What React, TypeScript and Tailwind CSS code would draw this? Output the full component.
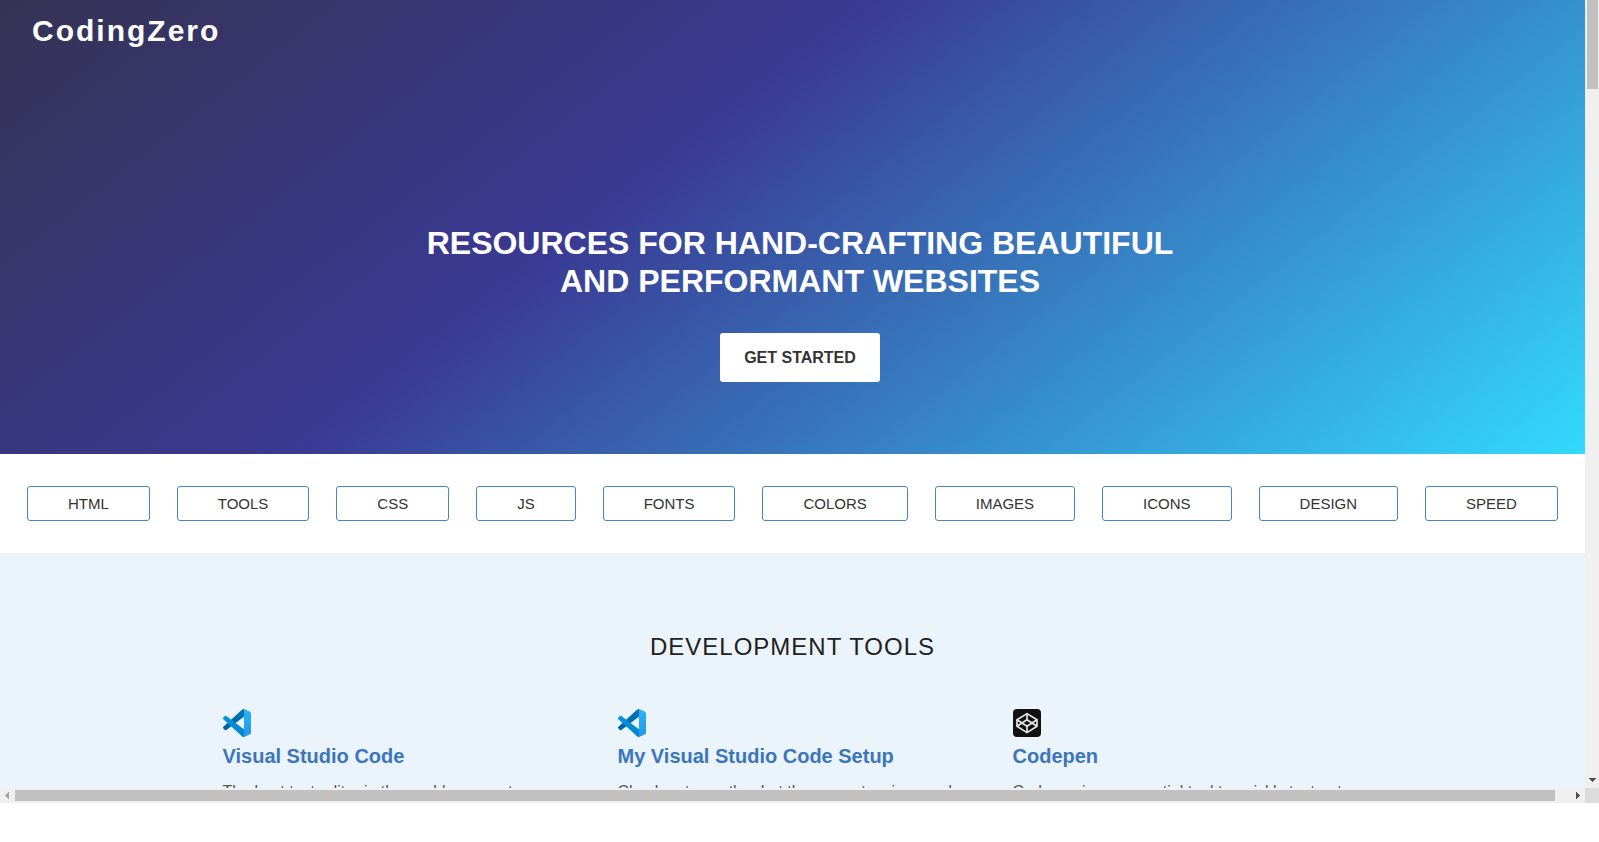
import React from "react";

const topics = ["HTML", "TOOLS", "CSS", "JS", "FONTS", "COLORS", "IMAGES", "ICONS", "DESIGN", "SPEED"];

function VsCodeIcon({ id }: { id: string }) {
  return (
    <svg viewBox="0 0 100 100" className="block size-7" aria-hidden="true">
      <defs>
        <linearGradient id={`${id}-edge`} x1="0" y1="0" x2="0" y2="1">
          <stop offset="0" stopColor="#2cb5f6" />
          <stop offset="1" stopColor="#1f96ee" />
        </linearGradient>
        <linearGradient id={`${id}-rise`} x1="1" y1="0" x2="0" y2="1">
          <stop offset="0" stopColor="#0079bf" />
          <stop offset="1" stopColor="#0062a3" />
        </linearGradient>
        <linearGradient id={`${id}-fall`} x1="0" y1="0" x2="1" y2="1">
          <stop offset="0" stopColor="#0a96de" />
          <stop offset="1" stopColor="#007fcb" />
        </linearGradient>
      </defs>
      <path
        fill={`url(#${id}-rise)`}
        d="M96.5 10.8 75.9.9a6.2 6.2 0 0 0-7.1 1.2L1.3 63.7a4.2 4.2 0 0 0 0 6.1l5.5 5a4.2 4.2 0 0 0 5.4.3L93.4 13.4c2.7-2.1 6.6-.1 6.6 3.3v-.3a6.3 6.3 0 0 0-3.5-5.6Z"
      />
      <path
        fill={`url(#${id}-fall)`}
        d="M96.5 89.2 75.9 99.1a6.2 6.2 0 0 1-7.1-1.2L1.3 36.3a4.2 4.2 0 0 1 0-6.1l5.5-5a4.2 4.2 0 0 1 5.4-.3l81.2 61.7c2.7 2.1 6.6.1 6.6-3.3v.3a6.3 6.3 0 0 1-3.5 5.6Z"
      />
      <path
        fill={`url(#${id}-edge)`}
        d="M75.9 99.1a6.2 6.2 0 0 1-7.1-1.2c2.3 2.3 6.2.7 6.2-2.6V4.7c0-3.3-3.9-4.9-6.2-2.6a6.2 6.2 0 0 1 7.1-1.2l20.6 9.9A6.3 6.3 0 0 1 100 16.4v67.2a6.3 6.3 0 0 1-3.5 5.7L75.9 99.1Z"
      />
    </svg>
  );
}

function CodepenIcon() {
  return (
    <svg viewBox="0 0 28 28" className="block size-7" aria-hidden="true">
      <rect width="28" height="28" rx="4" fill="#111" />
      <g fill="none" stroke="#e6e6e6" strokeWidth="1.7" strokeLinejoin="round">
        <path d="M14 4.6 24 10.8v6.4l-10 6.4-10-6.4v-6.4Z" />
        <path d="M14 4.6v6.2M14 17.2v6.4M4 10.8l10 6.4 10-6.4M4 17.2l10-6.4 10 6.4" />
      </g>
    </svg>
  );
}

const tools = [
  {
    title: "Visual Studio Code",
    icon: <VsCodeIcon id="vscode-a" />,
    text: "The best text editor in the world, so great",
  },
  {
    title: "My Visual Studio Code Setup",
    icon: <VsCodeIcon id="vscode-b" />,
    text: "Check out my other hot themes extensions and",
  },
  {
    title: "Codepen",
    icon: <CodepenIcon />,
    text: "Codepen is an essential tool to quickly test out",
  },
];

function Hero() {
  return (
    <header className="bg-[linear-gradient(142deg,#353353_0%,#3a3993_40%,#33d9ff_100%)] pb-18 text-white">
      <a href="#top" className="block px-8 pt-3 text-[30px] leading-[38px] font-bold tracking-[2px]">
        CodingZero
      </a>
      <div className="-mr-[15px] flex flex-col items-center pt-[174px]">
        <h1 className="max-w-200 text-center text-[32px] leading-[38px] font-bold">
          RESOURCES FOR HAND-CRAFTING BEAUTIFUL AND PERFORMANT WEBSITES
        </h1>
        <a
          href="#tools"
          className="mt-[33px] flex h-[49px] w-40 items-center justify-center rounded-[3px] bg-white text-base font-bold text-[#333]"
        >
          GET STARTED
        </a>
      </div>
    </header>
  );
}

function TopicNav() {
  return (
    <nav className="flex justify-evenly bg-white py-8">
      {topics.map((topic) => (
        <a
          key={topic}
          href={`#${topic.toLowerCase()}`}
          className="rounded-[3px] border border-[#4584cb] px-10 py-2 text-[15px] leading-[17px] text-[#333]"
        >
          {topic}
        </a>
      ))}
    </nav>
  );
}

function Tools() {
  return (
    <section id="tools" className="bg-[#ebf3fb] pt-20">
      <h2 className="text-center text-2xl leading-7 tracking-[1px] text-[#222]">DEVELOPMENT TOOLS</h2>
      <div className="mx-auto mt-12 grid max-w-[1140px] grid-cols-3 gap-x-[45px]">
        {tools.map((tool) => (
          <article key={tool.title}>
            {tool.icon}
            <h3 className="mt-[7px] text-xl leading-6 font-bold">
              <a href="#tools" className="text-[#3b76bb]">
                {tool.title}
              </a>
            </h3>
            <p className="mt-3 text-base leading-6 whitespace-nowrap text-[#555]">{tool.text}</p>
          </article>
        ))}
      </div>
    </section>
  );
}

function VerticalScrollbar() {
  return (
    <div className="flex w-[14px] shrink-0 flex-col justify-between bg-[#f0f0f0] pl-[2px]" aria-hidden="true">
      <div className="mr-px h-[89px] bg-[#c1c1c1]" />
      <svg viewBox="0 0 12 12" className="mb-px h-3 w-3" shapeRendering="crispEdges">
        <path fill="#505050" d="M2 3h7v1H8v1H7v1H6v1H5V6H4V5H3V4H2z" />
      </svg>
    </div>
  );
}

function HorizontalScrollbar() {
  return (
    <div className="flex h-[15px] bg-[#f0f0f0]" aria-hidden="true">
      <svg viewBox="0 0 15 15" className="size-[15px] shrink-0" shapeRendering="crispEdges">
        <path fill="#a3a3a3" d="M9 4v7H8v-1H7V9H6V8H5V7h1V6h1V5h1V4z" />
      </svg>
      <div className="my-[2px] flex-1 bg-[#c1c1c1]" />
      <div className="flex w-[30px] justify-end">
        <svg viewBox="0 0 15 15" className="size-[15px]" shapeRendering="crispEdges">
          <path fill="#505050" d="M6 4v7h1v-1h1V9h1V8h1V7H9V6H8V5H7V4z" />
        </svg>
      </div>
      <div className="w-[14px] bg-[#dcdcdc]" />
    </div>
  );
}

export default function App() {
  return (
    <div id="top" className="min-h-screen bg-white font-['Liberation_Sans',Arial,sans-serif]">
      <div className="flex h-[788px]">
        <main className="min-w-0 flex-1 overflow-hidden bg-[#ebf3fb]">
          <Hero />
          <TopicNav />
          <Tools />
        </main>
        <VerticalScrollbar />
      </div>
      <HorizontalScrollbar />
    </div>
  );
}
